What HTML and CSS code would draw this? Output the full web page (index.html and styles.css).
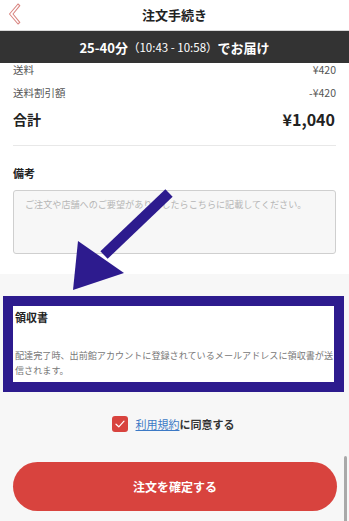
FILE: index.html
```html
<!DOCTYPE html>
<html lang="ja">
<head>
<meta charset="utf-8">
<link rel="stylesheet" href="styles.css">
</head>
<body>
<div class="page">
  <header class="top">
    <svg class="back" width="14" height="22" viewBox="0 0 14 22"><path d="M11 1 L2.5 11 L11 21 L12.8 19.3 L6 11 L12.8 2.7 Z" fill="none" stroke="#d98580" stroke-width="1.1" stroke-linejoin="round"/></svg>
    <h1 class="title">注文手続き</h1>
  </header>
  <div class="eta"><b>25-40分</b><span class="eta-time">（10:43 - 10:58）</span><b>でお届け</b></div>

  <section class="main">
    <div class="row"><span>送料</span><span>¥420</span></div>
    <div class="row"><span>送料割引額</span><span>-¥420</span></div>
    <div class="row total"><span>合計</span><span class="total-val">¥1,040</span></div>
    <hr class="sep">
    <div class="label">備考</div>
    <div class="memo">ご注文や店舗へのご要望がありましたらこちらに記載してください。</div>
  </section>

  <section class="receipt">
    <div class="label">領収書</div>
    <p class="receipt-text">配達完了時、出前館アカウントに登録されているメールアドレスに領収書が送信されます。</p>
  </section>

  <div class="agree">
    <span class="check"><svg width="10" height="8" viewBox="0 0 10 8"><path d="M1 4.2 L3.8 6.8 L9 1.2" fill="none" stroke="#fff" stroke-width="1.2" stroke-linecap="round" stroke-linejoin="round"/></svg></span>
    <span class="agree-text"><a class="terms">利用規約</a>に同意する</span>
  </div>
  <div class="btn-wrap"><button class="confirm">注文を確定する</button></div>

  <svg class="arrow" width="349" height="521" viewBox="0 0 349 521">
    <line x1="169" y1="193" x2="104" y2="255" stroke="#2d1b8e" stroke-width="10.5"/>
    <polygon points="78,241 124,273 73,290" fill="#2d1b8e"/>
  </svg>
  <div class="scrollbar"></div>
</div>
</body>
</html>
```

FILE: styles.css
```css
* { box-sizing: border-box; }
html, body { margin: 0; padding: 0; }
body {
  width: 349px;
  height: 521px;
  overflow: hidden;
  background: #f7f7f7;
  font-family: "Noto Sans CJK JP", "Noto Sans", sans-serif;
  color: #333;
}
.page { position: relative; width: 349px; height: 521px; overflow: hidden; }
.top {
  height: 30px;
  background: #fff;
  display: flex;
  align-items: center;
  justify-content: center;
  position: relative;
}
.back { position: absolute; left: 7px; top: 3px; }
.title { margin: 0; font-size: 13px; font-weight: 700; color: #222; line-height: 30px; }
.eta {
  height: 33px;
  background: #333;
  color: #fff;
  display: flex;
  align-items: center;
  justify-content: center;
  font-size: 13px;
  border-top: 1px solid #d8d8d8;
}
.eta b { font-weight: 700; }
.eta-time { font-size: 11.5px; font-weight: 400; }
.main {
  background: #fff;
  padding: 0 13px 20px;
}
.row {
  display: flex;
  justify-content: space-between;
  font-size: 10.5px;
  line-height: 14px;
  color: #555;
  margin-bottom: 9px;
}
.row.total {
  font-size: 14px;
  line-height: 20px;
  font-weight: 700;
  color: #222;
  margin-top: 9px;
  margin-bottom: 0;
  padding-right: 1px;
}
.total-val { font-size: 16px; }
.sep { border: 0; border-top: 1px solid #e8e8e8; margin: 16px 0 0; }
.label { font-size: 11px; font-weight: 700; line-height: 14px; color: #222; margin-top: 20px; }
.memo {
  margin-top: 10px;
  height: 64px;
  border: 1px solid #cfcfcf;
  border-radius: 3px;
  background: #f7f7f7;
  padding: 6px 11px;
  font-size: 9.1px;
  line-height: 14px;
  color: #b5b5b5;
  white-space: nowrap;
}
.receipt {
  margin: 22px 5px 0 3px;
  background: #fff;
  border: 10px solid #2d1b8e;
  padding: 4px 0 6px 2px;
  height: 96px;
}
.receipt .label { margin-top: 0; }
.receipt-text {
  margin: 24px -3px 0 0;
  font-size: 9.1px;
  line-height: 15px;
  color: #777;
}
.agree {
  margin-top: 24px;
  display: flex;
  align-items: center;
  justify-content: center;
  gap: 8px;
  padding-right: 3px;
}
.check {
  width: 16px;
  height: 16px;
  border-radius: 3px;
  background: #d8433e;
  display: flex;
  align-items: center;
  justify-content: center;
}
.agree-text { font-size: 11px; font-weight: 700; color: #333; line-height: 16px; }
.terms { color: #3c79c5; text-decoration: underline; font-weight: 400; }
.btn-wrap { padding: 30px 12px 0 13px; }
.confirm {
  width: 100%;
  height: 49px;
  border: 0;
  border-radius: 25px;
  background: #d8433e;
  color: #fff;
  font-family: inherit;
  font-size: 12px;
  font-weight: 700;
}
.arrow { position: absolute; left: 0; top: 0; pointer-events: none; }
.scrollbar {
  position: absolute;
  left: 344px;
  top: 456px;
  width: 3px;
  height: 70px;
  background: #a9a9a9;
  border-radius: 2px;
}
```
